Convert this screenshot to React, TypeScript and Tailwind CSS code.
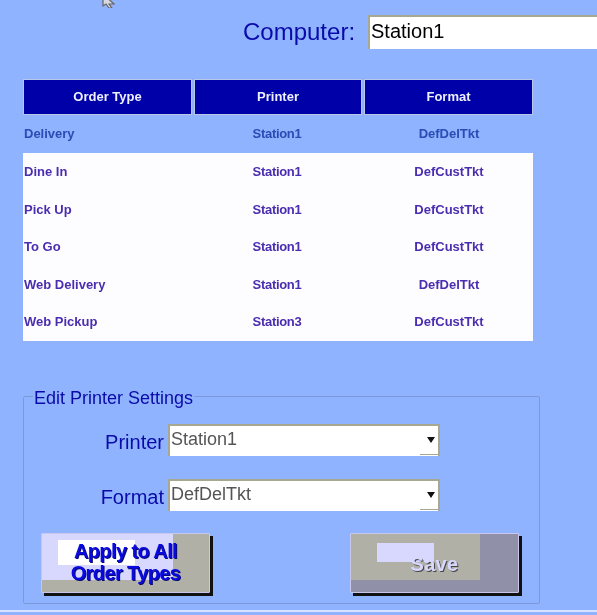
import React from 'react';

interface OrderRow {
  type: string;
  printer: string;
  format: string;
}

const rows: OrderRow[] = [
  { type: 'Dine In', printer: 'Station1', format: 'DefCustTkt' },
  { type: 'Pick Up', printer: 'Station1', format: 'DefCustTkt' },
  { type: 'To Go', printer: 'Station1', format: 'DefCustTkt' },
  { type: 'Web Delivery', printer: 'Station1', format: 'DefDelTkt' },
  { type: 'Web Pickup', printer: 'Station3', format: 'DefCustTkt' },
];

const headers = ['Order Type', 'Printer', 'Format'];

const Row: React.FC<{ row: OrderRow; className: string; height: string }> = ({ row, className, height }) => (
  <div className={`grid grid-cols-[170px_168px_172px] items-center text-[13px] font-bold ${height} ${className}`}>
    <div className="pl-px">{row.type}</div>
    <div className="text-center tracking-[-0.3px]">{row.printer}</div>
    <div className="pl-[4px] text-center">{row.format}</div>
  </div>
);

const SelectBox: React.FC<{ label: string; value: string; className: string }> = ({ label, value, className }) => (
  <div className={`flex items-center ${className}`}>
    <div className="w-[144px] shrink-0 pr-[4px] pt-[3px] text-right text-[20px] leading-[24px] text-[#0a0aa8]">{label}</div>
    <div className="relative flex h-[32px] w-[272px] shrink-0 border-t-[2px] border-l-[2px] border-r-[2px] border-t-[#a8a890] border-l-[#a8a890] border-r-[#a8a890] bg-white pl-[1px] text-[18px] leading-[26px] text-[#555]">
      {value}
      <svg className="absolute right-[3px] top-[11px]" width="8" height="6" viewBox="0 0 8 6">
        <path d="M0 0H8L4 6Z" fill="#111" />
      </svg>
      <div className="absolute right-0 bottom-[1px] h-px w-[18px] bg-[#a8a890]" />
    </div>
  </div>
);

export default function App() {
  return (
    <div className="relative flex h-[615px] w-[597px] flex-col overflow-hidden bg-[#8fb3ff] font-['Liberation_Sans',Arial,sans-serif] blur-[0.4px]">
      <svg className="absolute left-[101px] top-[-6px]" width="18" height="14" viewBox="0 0 18 14">
        <path d="M2 0L13 10L8 10L11 14L8 14L5 10L2 12Z" fill="#d8d8e0" stroke="#666" strokeWidth="1.2" />
      </svg>

      <div className="mt-[15px] flex h-[34px] pl-[243px]">
        <div className="w-[125px] shrink-0 text-[24px] leading-[34px] text-[#0a0aa8]">Computer:</div>
        <div className="w-[240px] shrink-0 border-t-[2px] border-l-[2px] border-t-[#a8a890] border-l-[#a8a890] bg-white pl-[1px] text-[20px] leading-[28px] text-black">
          Station1
        </div>
      </div>

      <div className="ml-[23px] mt-[30px] w-[510px]">
        <div className="grid h-[36px] grid-cols-[169px_168px_169px] gap-x-[2px]">
          {headers.map((h) => (
            <div
              key={h}
              className="flex items-center justify-center border border-[#b9c6e8] bg-[#0000a8] text-[13px] font-bold text-[#eef0ff]"
            >
              {h}
            </div>
          ))}
        </div>
        <Row
          row={{ type: 'Delivery', printer: 'Station1', format: 'DefDelTkt' }}
          height="h-[38px]"
          className="text-[#2a4cb4]"
        />
        <div className="bg-[#fdfdff] text-[#4b2db0]">
          {rows.map((row) => (
            <Row key={row.type} row={row} height="h-[37.5px]" className="" />
          ))}
        </div>
      </div>

      <fieldset className="ml-[23px] mt-[44.5px] h-[219px] w-[517px] shrink-0 rounded-[2px] border border-[#7f99d8] p-0">
        <legend className="ml-[9px] px-px pt-[4px] text-[18px] leading-[18px] text-[#0a0aa8]">Edit Printer Settings</legend>
        <SelectBox label="Printer" value="Station1" className="mt-[17px]" />
        <SelectBox label="Format" value="DefDelTkt" className="mt-[23px]" />

        <div className="mt-[22px] flex pl-[17px]">
          <div className="relative h-[60px] w-[169px] shrink-0">
            <span className="absolute left-[3px] top-[3px] h-[60px] w-[169px] bg-[#111]" />
            <button className="relative block h-[60px] w-[169px] overflow-hidden rounded-[1px] border border-[#c8c8ee] bg-[#b0b0a6]">
              <span className="absolute left-0 top-0 h-[46px] w-[131px] bg-[#d8d8ff]" />
              <span className="absolute left-[16px] top-[6px] h-[25px] w-[77px] bg-white" />
              <span className="relative block pb-[3px] text-[20px] font-bold leading-[22px] tracking-[-0.6px] text-[#0a0ae0] [text-shadow:1px_1px_0_#0a0a70]">
                Apply to All
                <br />
                Order Types
              </span>
            </button>
          </div>
          <div className="relative ml-[140px] h-[60px] w-[169px] shrink-0">
            <span className="absolute left-[3px] top-[3px] h-[60px] w-[169px] bg-[#111]" />
            <button className="relative block h-[60px] w-[169px] overflow-hidden rounded-[1px] border border-[#c8c8ee] bg-[#9090a8]">
              <span className="absolute left-0 top-0 h-[46px] w-[129px] bg-[#b0b0a6]" />
              <span className="absolute left-[26px] top-[9px] h-[19px] w-[57px] bg-[#d8d8ff]" />
              <span className="relative block pt-[2px] text-[20px] font-bold leading-[22px] tracking-[0.3px] text-[#d8d8ff] [text-shadow:1px_1px_0_#444]">
                Save
              </span>
            </button>
          </div>
        </div>
      </fieldset>

      <div className="absolute bottom-[3px] left-0 h-[2px] w-full bg-[#d6e2ff]" />
    </div>
  );
}
